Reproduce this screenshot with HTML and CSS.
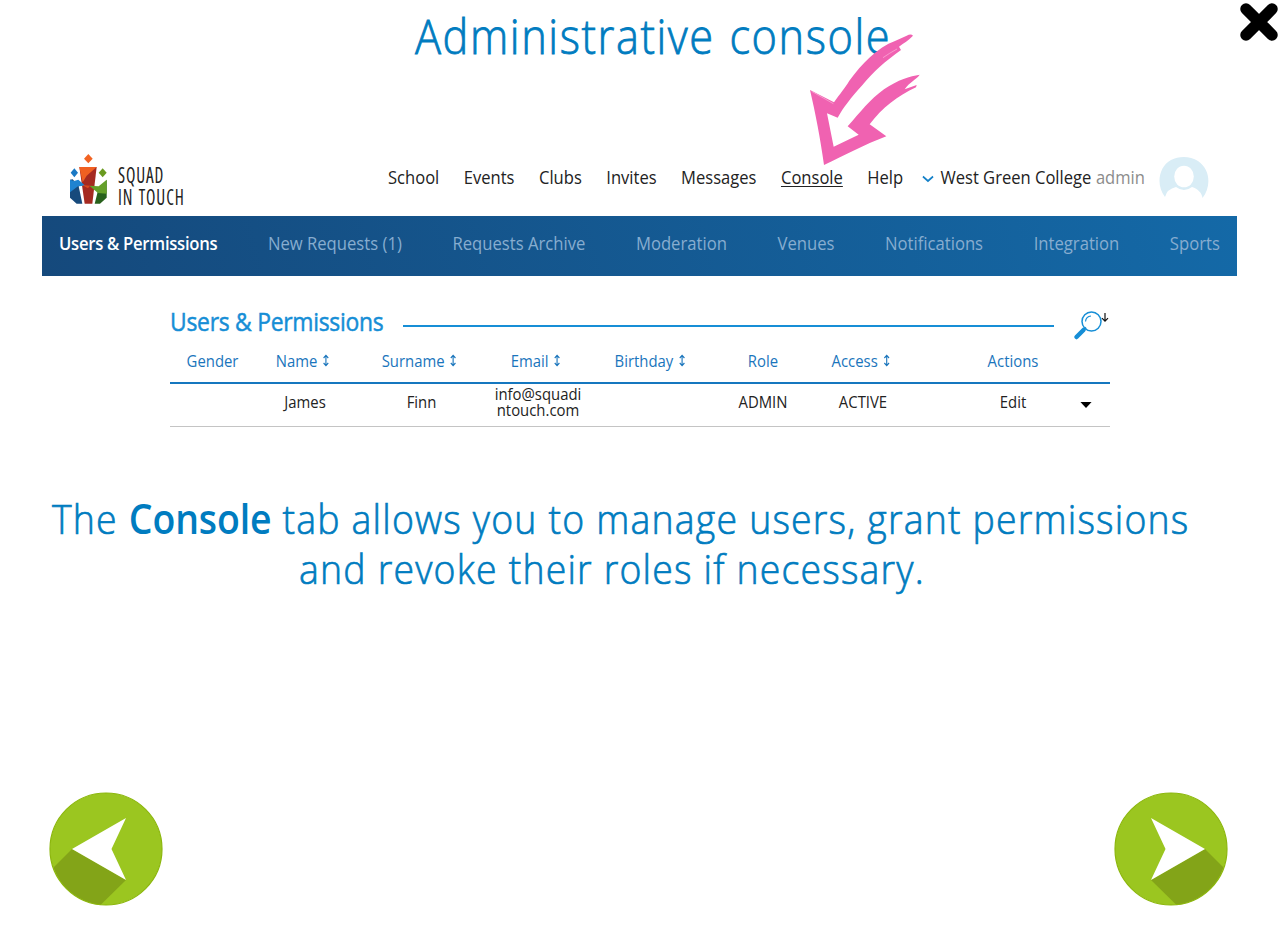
FILE: index.html
```html
<!DOCTYPE html>
<html lang="en">
<head>
<meta charset="utf-8">
<title>Administrative console</title>
<link rel="stylesheet" href="styles.css">
</head>
<body>
<main class="slide">
  <h1 class="title">Administrative console</h1>
  <svg class="close" viewBox="0 0 40 40"><path d="M7 7 33 33M33 7 7 33" stroke="#000" stroke-width="11.5" stroke-linecap="round"/></svg>
  <section class="app">
    <header class="top">
      <svg class="logo" viewBox="27 30 120 156">
        <path d="M85 27 98 41 85 55 72 41Z" fill="#f26322"/>
        <path d="M43 70 54 83 43 97 32 83Z" fill="#1a79c4"/>
        <path d="M128 70 140 83 128 97 116 83Z" fill="#6a9a1f"/>
        <path d="M58 66H110L97 176H74Z" fill="#a52a21"/>
        <path d="M58 66H110L80 92 68 112Z" fill="#f06022"/>
        <path d="M30 104 38 103 56 124 67 176H50L30 158Z" fill="#174a7c"/>
        <path d="M30 104 42 108 55 104 76 122 54 124 30 142Z" fill="#1f83d0"/>
        <path d="M140 104V158L120 176H104L113 140Z" fill="#28611c"/>
        <path d="M88 122 116 124 140 104V146L114 144Z" fill="#65a02a"/>
        <path d="M66 120 90 122 84 130Z" fill="#d9481f"/>
      </svg>
      <div class="brand"><span>SQUAD</span><span>IN TOUCH</span></div>
      <nav class="menu">
        <a>School</a><a>Events</a><a>Clubs</a><a>Invites</a><a>Messages</a><a class="current">Console</a><a>Help</a>
      </nav>
      <div class="account">
        <svg class="chev" viewBox="0 0 13 8"><path d="M1 1.500 6.500 6 12 1.500" fill="none" stroke="#1480c8" stroke-width="1.800"/></svg>
        <span>West Green College</span><span class="role">admin</span>
      </div>
      <svg class="avatar" viewBox="0 0 50 44"><path d="M6 40C-3 29 -1 10 12 3C20-1 31-1 39 4C52 13 52 30 43.500 41C43 36 39 32 33 30Q25 36 17 30Q8 32 6 40Z" fill="#d9edf6"/><ellipse cx="25" cy="19.500" rx="9.800" ry="10.800" fill="#fff"/></svg>
    </header>
    <nav class="bar"><div class="tabs">
      <a class="on">Users &amp; Permissions</a><a>New Requests (1)</a><a>Requests Archive</a><a>Moderation</a><a>Venues</a><a>Notifications</a><a>Integration</a><a>Sports</a>
    </div></nav>
    <section class="panel">
      <div class="heading"><h2>Users &amp; Permissions</h2><i class="rule"></i>
        <svg class="search" viewBox="0 0 36 30"><path d="M3.500 26 10.500 19" stroke="#168ed6" stroke-width="4.500" stroke-linecap="round"/><path d="M10 19.500 13 16.500" stroke="#168ed6" stroke-width="2"/><circle cx="18.500" cy="10.500" r="9.500" fill="none" stroke="#168ed6" stroke-width="1.500"/><path d="M12.500 10.500Q13 5.500 18 5" fill="none" stroke="#168ed6" stroke-width="1.200"/><path d="M32 2V10M29 7.200 32 10.200 35 7.200" fill="none" stroke="#111" stroke-width="1.200"/></svg>
      </div>
      <div class="row head">
        <span>Gender</span><span class="sortable">Name<svg class="sort" viewBox="0 0 7 13"><path d="M3.500 1.500V11.500M1 4 3.500 1.300 6 4M1 9 3.500 11.700 6 9"/></svg></span><span class="sortable">Surname<svg class="sort" viewBox="0 0 7 13"><path d="M3.500 1.500V11.500M1 4 3.500 1.300 6 4M1 9 3.500 11.700 6 9"/></svg></span><span class="sortable">Email<svg class="sort" viewBox="0 0 7 13"><path d="M3.500 1.500V11.500M1 4 3.500 1.300 6 4M1 9 3.500 11.700 6 9"/></svg></span><span>Birthday<svg class="sort" viewBox="0 0 7 13"><path d="M3.500 1.500V11.500M1 4 3.500 1.300 6 4M1 9 3.500 11.700 6 9"/></svg></span><span>Role</span><span class="sortable">Access<svg class="sort" viewBox="0 0 7 13"><path d="M3.500 1.500V11.500M1 4 3.500 1.300 6 4M1 9 3.500 11.700 6 9"/></svg></span><span></span><span>Actions</span><span></span>
      </div>
      <div class="row data">
        <span></span><span>James</span><span>Finn</span><span class="mail">info@squadi<br>ntouch.com</span><span></span><span>ADMIN</span><span>ACTIVE</span><span></span><span>Edit</span><span><i class="caret"></i></span>
      </div>
    </section>
  </section>
  <p class="caption"><span class="l1">The <b>Console</b> tab allows you to manage users, grant permissions</span><span class="l2">and revoke their roles if necessary.</span></p>
  <footer class="pager">
    <svg class="step" viewBox="0 0 114 114"><circle cx="57" cy="57" r="56" fill="#9bc620"/><path d="M23 57 4.500 75.500A56 56 0 0 0 51.500 113L77 88Z" fill="#83a418"/><circle cx="57" cy="57" r="56" fill="none" stroke="#8cb70d" stroke-width="1.200"/><path d="M23 57 77 26 62.500 57 77 88Z" fill="#fff"/></svg>
    <svg class="step" viewBox="0 0 114 114"><circle cx="57" cy="57" r="56" fill="#9bc620"/><path d="M91 57 109.500 75.500A56 56 0 0 1 62.500 113L37 88Z" fill="#83a418"/><circle cx="57" cy="57" r="56" fill="none" stroke="#8cb70d" stroke-width="1.200"/><path d="M91 57 37 26 51.500 57 37 88Z" fill="#fff"/></svg>
  </footer>
  <svg class="pointer" viewBox="0 0 450 480"><path fill="#f062b1" d="M60 210 132 247C150 220 165 205 178 182C215 132 262 82 315 63L350 47Q363 40 369 47C355 62 342 68 327 80L333 90C285 124 250 156 218 194C182 234 160 262 143 293L111 280 131 380 206 344 173 319C210 278 240 238 282 208C325 178 360 169 389 164C380 178 357 187 344 208L380 195 378 202C325 226 275 265 239 313L289 349C225 373 160 408 102 435C91 355 76 278 60 210Z"/><path d="M65 214 130 251M321 87Q299 99 279 113" fill="none" stroke="#f9a5d3" stroke-width="2.500"/></svg>
</main>
</body>
</html>
```
FILE: styles.css
```css
* { box-sizing: border-box; }
body { margin: 0; background: #fff; font-family: "Open Sans", "Noto Sans", sans-serif; }
.slide { position: relative; width: 1280px; height: 939px; overflow: hidden; display: flex; flex-direction: column; }
.title { margin: 0 0 0 415px; height: 155px; font-size: 47px; font-weight: 300; line-height: 72px; letter-spacing: 1.7px; color: #007cc0; white-space: nowrap; word-spacing: 2px; transform: scaleX(.922); transform-origin: left; -webkit-text-stroke: .8px #007cc0; }
.close { position: absolute; left: 1239px; top: 2px; width: 40px; height: 40px; }
.app { width: 1195px; margin-left: 42px; height: 332px; }
.top { height: 61px; display: flex; align-items: flex-start; font-size: 18px; line-height: 24px; color: #222; white-space: nowrap; }
.logo { width: 40px; height: 52px; margin-left: 27px; flex: none; overflow: visible; }
.brand { width: 270px; flex: none; margin: 9px 0 0 9px; display: flex; flex-direction: column; font-size: 21px; line-height: 22px; font-stretch: 75%; letter-spacing: 1.1px; word-spacing: 1.5px; transform: scaleX(.82); transform-origin: left; }
.menu { width: 560px; flex: none; display: flex; justify-content: space-between; margin: 10px -45px 0 0; transform: scaleX(.92); transform-origin: left; }
.current { text-decoration: underline; text-underline-offset: 2px; }
.account { width: 241px; flex: none; margin: 10px -19px 0 19px; display: flex; align-items: center; transform: scaleX(.92); transform-origin: left; }
.chev { width: 13px; height: 8px; margin: 4px 7px 0 0; flex: none; }
.role { color: #8c8c8c; margin-left: 5px; }
.avatar { width: 50px; height: 44px; margin: 2px 0 0 15px; flex: none; }
.bar { height: 60px; padding: 0 17px; background: linear-gradient(75deg, #15497c, #1469a7); }
.tabs { width: 1255px; display: flex; justify-content: space-between; font-size: 18px; line-height: 54px; color: #87add0; white-space: nowrap; transform: scaleX(.925); transform-origin: left; }
.on { color: #fff; font-weight: 600; letter-spacing: -.3px; }
.panel { width: 940px; margin-left: 128px; padding-top: 33px; }
.heading { height: 33px; display: flex; color: #168ed6; }
h2 { margin: -1px 0 0; width: 233px; font-size: 26px; line-height: 26px; font-weight: 400; letter-spacing: -.3px; white-space: nowrap; transform: scaleX(.88); transform-origin: left; -webkit-text-stroke: .5px #168ed6; }
.rule { width: 651px; height: 2px; margin-top: 16px; background: #168ed6; }
.search { width: 36px; height: 30px; margin: 2px 0 0 19px; }
.row { display: grid; grid-template-columns: 85px 100px 133px 100px 124px 102px 98px 52px 98px 48px; text-align: center; font-size: 16px; white-space: nowrap; align-items: center; }
.row span { transform: scaleX(.93); }
.head { height: 42px; border-bottom: 2px solid #1577bf; color: #1a75bc; padding-bottom: 2px; }
.sort { width: 7px; height: 13px; margin-left: 6px; fill: none; stroke: #1a75bc; stroke-width: 1.2; }
.sortable { padding-right: 5px; }
.data { height: 43px; border-bottom: 1px solid #c4c4c4; color: #222; line-height: 16px; padding-bottom: 7px; }
.mail { padding-top: 1px; }
.caret { display: inline-block; border: 6px solid transparent; border-top-color: #000; border-bottom: 0; margin-top: 6px; }
.caption { margin: 6px 0 0; font-size: 41px; line-height: 50px; font-weight: 300; letter-spacing: 1.3px; color: #007cc0; display: flex; flex-direction: column; align-items: flex-start; white-space: nowrap; -webkit-text-stroke: .7px #007cc0; }
.caption b { font-weight: 600; letter-spacing: -.1px; -webkit-text-stroke: 0; }
.caption span { transform: scaleX(.913); transform-origin: left; }
.l1 { margin-left: 52px; }
.l2 { margin-left: 299px; }
.pager { margin: auto 52px 33px 49px; display: flex; justify-content: space-between; }
.step { width: 114px; height: 114px; }
.pointer { position: absolute; left: 790px; top: 20px; width: 150px; height: 160px; }
```
